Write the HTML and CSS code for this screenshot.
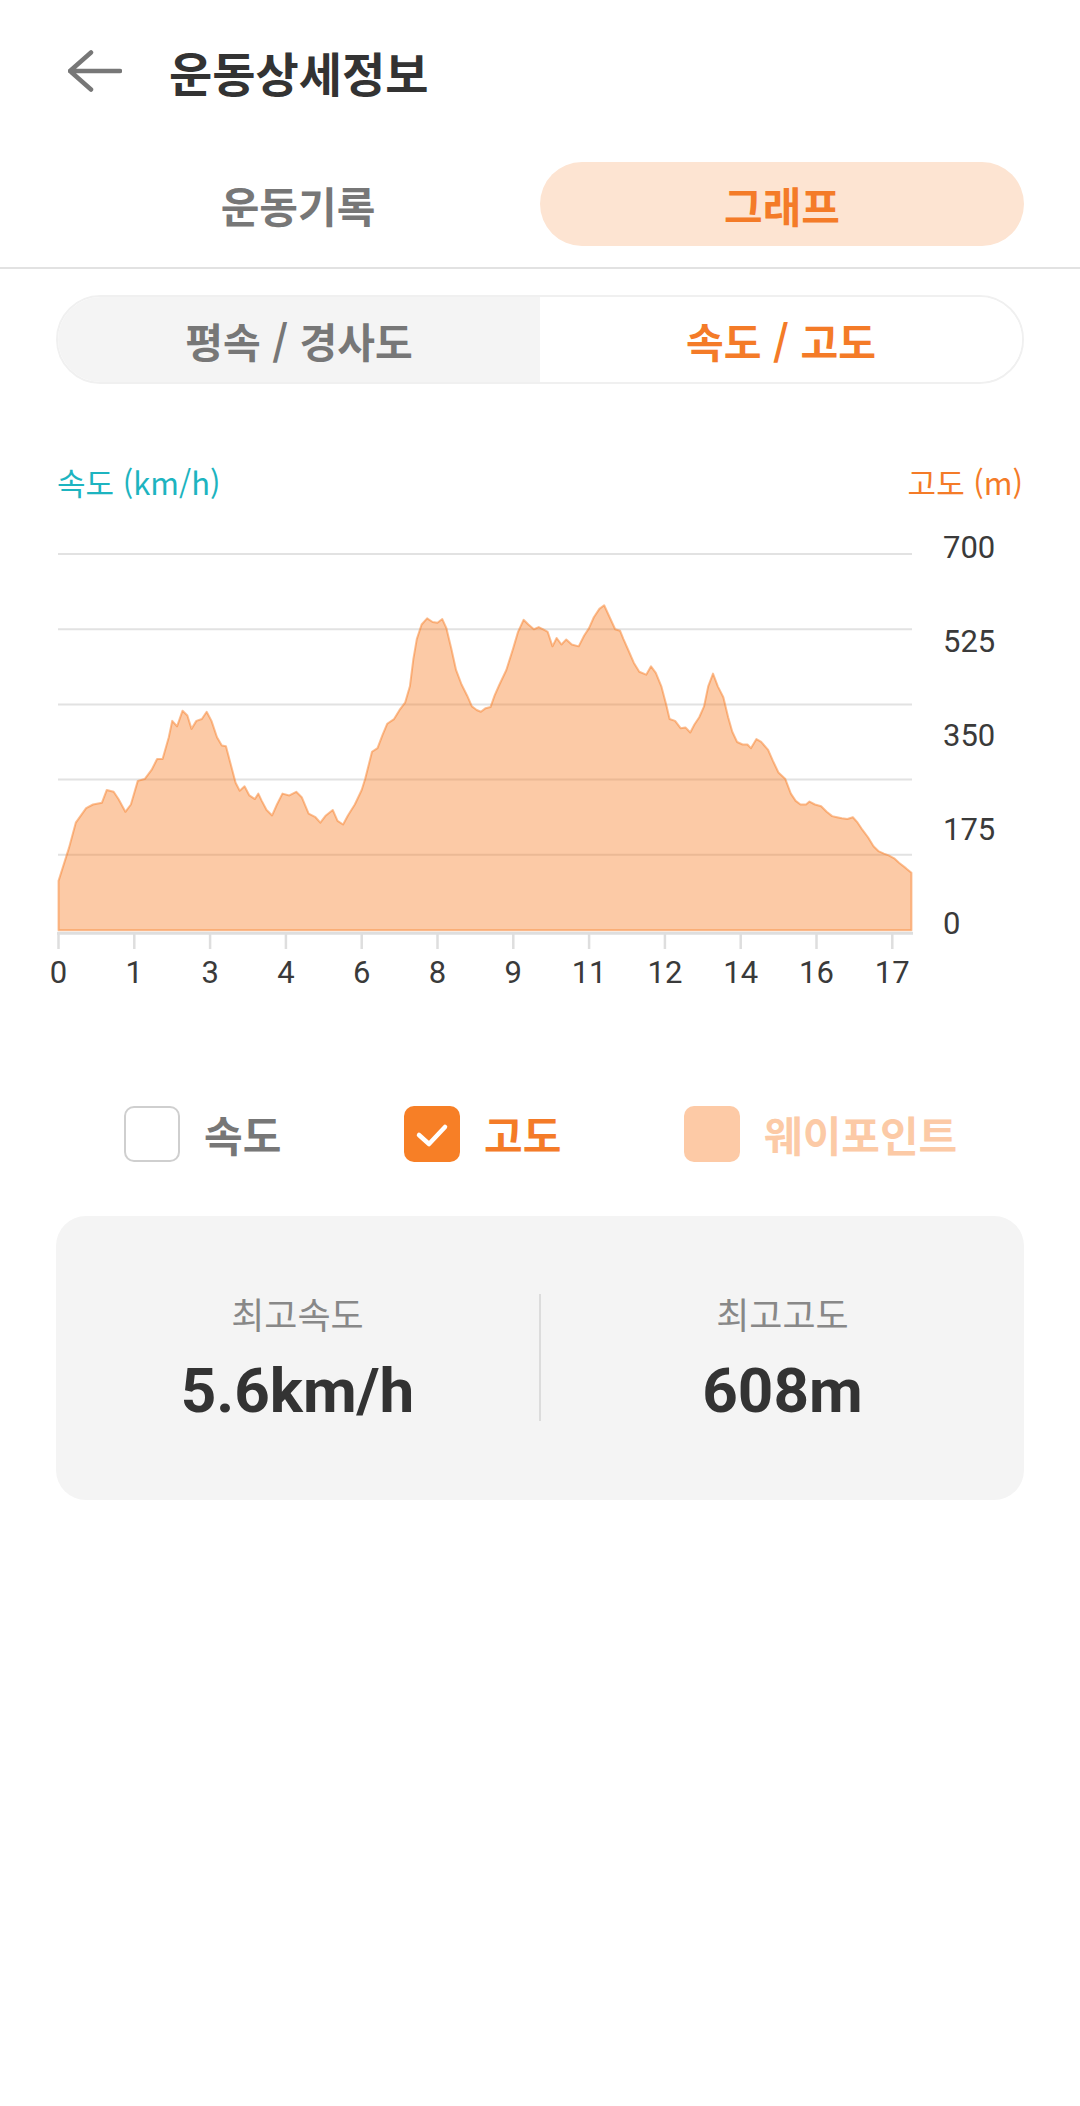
FILE: index.html
```html
<!DOCTYPE html>
<html lang="ko">
<head>
  <meta charset="UTF-8" />
  <meta name="viewport" content="width=device-width, initial-scale=1.0"/>
  <title>운동상세정보</title>
  <link rel="stylesheet" href="styles.css">
</head>
<body>
  <header class="header">
    <svg class="back" width="54" height="42" viewBox="0 0 54 42">
      <path d="M2 21 H52 M2 21 L23 2.5 M2 21 L23 39.5" fill="none" stroke="#777" stroke-width="4.5" stroke-linecap="round" stroke-linejoin="round"/>
    </svg>
    <h1 class="title">운동상세정보</h1>
  </header>

  <div class="tabs">
    <div class="tab">운동기록</div>
    <div class="tab active">그래프</div>
  </div>
  <div class="divider"></div>

  <div class="segment">
    <div class="seg-item">평속 / 경사도</div>
    <div class="seg-item active">속도 / 고도</div>
  </div>

  <div class="chart-head">
    <span class="axis-speed">속도 (km/h)</span>
    <span class="axis-alt">고도 (m)</span>
  </div>

  <svg class="chart" width="1080" height="460" viewBox="0 0 1080 460">
    <g stroke="#e2e2e2" stroke-width="2">
      <line x1="58" y1="14" x2="912" y2="14"/>
      <line x1="58" y1="89.2" x2="912" y2="89.2"/>
      <line x1="58" y1="164.4" x2="912" y2="164.4"/>
      <line x1="58" y1="239.6" x2="912" y2="239.6"/>
      <line x1="58" y1="314.8" x2="912" y2="314.8"/>
    </g>

    <!-- elevation profile, traced points -->
    <g transform="translate(0,-110) scale(0.6889,0.3636)">
      <path fill="#f7802a" fill-opacity="0.42" stroke="#f7802a" stroke-opacity="0.5" stroke-width="2" vector-effect="non-scaling-stroke" stroke-linejoin="round"
        d="M85,1376 L85,1240 L100,1150 L110,1080 L125,1040 L135,1030 L148,1025 L155,990 L165,995 L172,1015 L182,1050 L190,1030 L200,965 L210,960 L220,935 L228,905 L236,905 L245,845 L250,800 L257,815 L265,772 L272,785 L278,822 L285,800 L293,795 L300,775 L307,800 L315,845 L322,868 L328,870 L335,920 L342,970 L348,992 L355,980 L362,1005 L370,1015 L375,1000 L380,1020 L387,1045 L395,1060 L402,1030 L410,1000 L420,1005 L430,995 L438,1010 L448,1055 L458,1065 L465,1080 L473,1060 L483,1045 L490,1075 L498,1085 L505,1060 L515,1030 L525,990 L530,960 L540,885 L548,875 L555,840 L562,808 L572,795 L580,770 L588,750 L595,705 L600,630 L605,575 L612,535 L620,518 L628,528 L635,530 L642,520 L648,545 L655,600 L662,660 L670,700 L678,730 L685,760 L692,770 L698,775 L705,765 L712,762 L718,730 L725,700 L735,660 L745,600 L752,555 L760,522 L767,535 L775,548 L782,542 L790,550 L795,555 L802,595 L808,572 L815,590 L822,576 L830,590 L840,595 L848,565 L855,545 L862,515 L870,492 L877,482 L885,515 L893,548 L900,552 L905,575 L912,605 L920,640 L928,665 L938,673 L945,650 L952,668 L960,705 L967,755 L972,795 L980,800 L988,820 L995,818 L1002,832 L1008,810 L1015,790 L1022,760 L1028,705 L1035,670 L1042,705 L1050,735 L1057,790 L1063,830 L1070,858 L1078,865 L1085,865 L1090,875 L1098,850 L1105,858 L1115,880 L1122,910 L1130,942 L1140,960 L1148,1000 L1155,1020 L1162,1030 L1170,1030 L1175,1022 L1183,1030 L1192,1035 L1200,1050 L1208,1062 L1215,1065 L1222,1068 L1230,1070 L1238,1065 L1245,1080 L1252,1100 L1260,1120 L1268,1145 L1275,1158 L1283,1165 L1290,1170 L1298,1178 L1305,1190 L1315,1205 L1323,1218 L1323,1376 Z"/>
    </g>

    <line x1="57" y1="393.3" x2="913" y2="393.3" stroke="#dedede" stroke-width="3"/>
    <g stroke="#dedede" stroke-width="2.5">
      <line x1="58.5" y1="392" x2="58.5" y2="409"/>
      <line x1="134.3" y1="392" x2="134.3" y2="409"/>
      <line x1="210.1" y1="392" x2="210.1" y2="409"/>
      <line x1="285.9" y1="392" x2="285.9" y2="409"/>
      <line x1="361.7" y1="392" x2="361.7" y2="409"/>
      <line x1="437.5" y1="392" x2="437.5" y2="409"/>
      <line x1="513.3" y1="392" x2="513.3" y2="409"/>
      <line x1="589.1" y1="392" x2="589.1" y2="409"/>
      <line x1="664.9" y1="392" x2="664.9" y2="409"/>
      <line x1="740.7" y1="392" x2="740.7" y2="409"/>
      <line x1="816.5" y1="392" x2="816.5" y2="409"/>
      <line x1="892.3" y1="392" x2="892.3" y2="409"/>
    </g>

    <g class="y-labels">
      <text x="943" y="18">700</text>
      <text x="943" y="112">525</text>
      <text x="943" y="206">350</text>
      <text x="943" y="300">175</text>
      <text x="943" y="394">0</text>
    </g>
    <g class="x-labels" text-anchor="middle">
      <text x="58.5" y="443">0</text>
      <text x="134.3" y="443">1</text>
      <text x="210.1" y="443">3</text>
      <text x="285.9" y="443">4</text>
      <text x="361.7" y="443">6</text>
      <text x="437.5" y="443">8</text>
      <text x="513.3" y="443">9</text>
      <text x="589.1" y="443">11</text>
      <text x="664.9" y="443">12</text>
      <text x="740.7" y="443">14</text>
      <text x="816.5" y="443">16</text>
      <text x="892.3" y="443">17</text>
    </g>
  </svg>

  <div class="legend">
    <div class="legend-item">
      <span class="box"></span>
      <span class="legend-text">속도</span>
    </div>
    <div class="legend-item on">
      <span class="box">
        <svg width="56" height="56" viewBox="0 0 56 56">
          <polyline points="15,29 25,38 41,21" fill="none" stroke="#fff" stroke-width="4.5" stroke-linecap="round" stroke-linejoin="round"/>
        </svg>
      </span>
      <span class="legend-text">고도</span>
    </div>
    <div class="legend-item waypoint">
      <span class="box"></span>
      <span class="legend-text">웨이포인트</span>
    </div>
  </div>

  <div class="stats">
    <div class="stat">
      <div class="stat-label">최고속도</div>
      <div class="stat-value">5.6km/h</div>
    </div>
    <div class="stat-sep"></div>
    <div class="stat">
      <div class="stat-label">최고고도</div>
      <div class="stat-value">608m</div>
    </div>
  </div>
</body>
</html>
```

FILE: styles.css
```css
body {
  margin: 0;
  background: #fff;
  font-family: "Noto Sans CJK KR", "Noto Sans", sans-serif;
  color: #333;
}

.header {
  display: flex;
  align-items: center;
  height: 142px;
  padding-left: 68px;
}
.back { display: block; }
.title {
  margin: 0 0 0 47px;
  font-size: 47px;
  font-weight: 700;
  line-height: 1;
  color: #333;
}

.tabs {
  display: flex;
  height: 84px;
  margin-top: 20px;
  padding: 0 56px;
}
.tab {
  flex: 1;
  display: flex;
  align-items: center;
  justify-content: center;
  border-radius: 42px;
  font-size: 42px;
  font-weight: 700;
  color: #777;
}
.tab.active {
  background: #fde4d2;
  color: #f47b28;
}
.divider {
  height: 2px;
  margin-top: 21px;
  background: #e2e2e2;
}

.segment {
  display: flex;
  height: 89px;
  margin: 26px 56px 0;
  border: 2px solid #f0f0f0;
  border-radius: 45px;
  overflow: hidden;
  box-sizing: border-box;
}
.seg-item {
  flex: 1;
  display: flex;
  align-items: center;
  justify-content: center;
  background: #f4f4f4;
  font-size: 41px;
  font-weight: 700;
  color: #777;
}
.seg-item.active {
  background: #fff;
  color: #f47b28;
}

.chart-head {
  display: flex;
  justify-content: space-between;
  margin-top: 78px;
  padding: 0 57px;
  font-size: 31px;
  line-height: 40px;
}
.axis-speed { color: #1db4c0; }
.axis-alt { color: #f47b28; }

.chart {
  display: block;
  margin-top: 38px;
  overflow: visible;
}
.chart text {
  font-family: Roboto, "Noto Sans", sans-serif;
  font-size: 31px;
  fill: #3a3a3a;
}

.legend {
  display: grid;
  grid-template-columns: repeat(3, 280px);
  margin: 106px 0 0 124px;
}
.legend-item {
  display: flex;
  align-items: center;
  gap: 24px;
  height: 56px;
}
.box {
  width: 56px;
  height: 56px;
  border: 2px solid #cfcfcf;
  border-radius: 10px;
  box-sizing: border-box;
  background: #fff;
}
.box svg { display: block; }
.legend-text {
  font-size: 42px;
  font-weight: 700;
  line-height: 56px;
  color: #777;
}
.legend-item.on .box {
  border: none;
  background: #f77f26;
}
.legend-item.on .legend-text { color: #f47b28; }
.legend-item.waypoint .box {
  border: none;
  background: #fdcaa6;
}
.legend-item.waypoint .legend-text { color: #fccaa6; }

.stats {
  display: flex;
  height: 284px;
  margin: 54px 56px 0;
  padding-top: 77px;
  box-sizing: border-box;
  background: #f4f4f4;
  border-radius: 30px;
}
.stat {
  flex: 1;
  display: flex;
  flex-direction: column;
  align-items: center;
}
.stat-sep {
  width: 2px;
  height: 127px;
  margin-top: 1px;
  background: #dcdcdc;
}
.stat-label {
  font-size: 36px;
  line-height: 40px;
  color: #888;
}
.stat-value {
  margin-top: 22px;
  font-family: Roboto, "Noto Sans", sans-serif;
  font-size: 62px;
  font-weight: 700;
  line-height: 72px;
  color: #333;
}
```
